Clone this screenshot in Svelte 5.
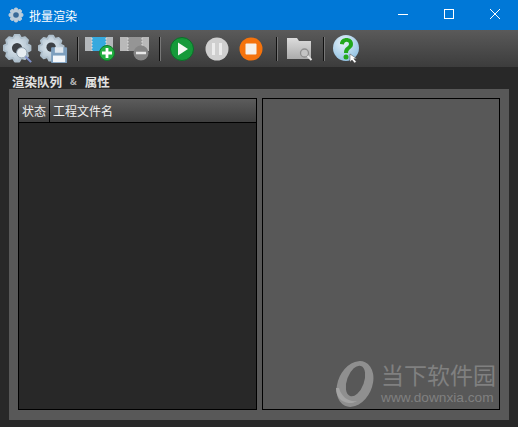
<script>
	const columns = ['状态', '工程文件名'];

	// rounded-ish cog outline, used by the two settings buttons and the title icon
	function gear(cx, cy, outer, inner, teeth = 8) {
		const step = (Math.PI * 2) / teeth;
		let d = '';
		for (let i = 0; i < teeth; i++) {
			const a = i * step - Math.PI / 2;
			const pts = [
				[inner, a - step * 0.5],
				[outer, a - step * 0.2],
				[outer, a + step * 0.2]
			];
			for (const [r, t] of pts) {
				const x = (cx + r * Math.cos(t)).toFixed(1);
				const y = (cy + r * Math.sin(t)).toFixed(1);
				d += (d ? 'L' : 'M') + x + ' ' + y;
			}
		}
		return d + 'Z';
	}
</script>

<div class="window">
	<header class="titlebar">
		<svg class="app-icon" viewBox="0 0 16 16" width="16" height="16">
			<path d={gear(8, 8, 7, 5.2)} fill="#bccddb" stroke="#bccddb" stroke-linejoin="round" />
			<circle cx="8" cy="8" r="2.800" fill="#3a6a98" />
		</svg>
		<span class="title">批量渲染</span>
		<div class="controls">
			<svg viewBox="0 0 46 30" width="46" height="30"><path d="M18 14.500h10" stroke="#fff" fill="none" /></svg>
			<svg viewBox="0 0 46 30" width="46" height="30"><rect x="18.500" y="9.500" width="9" height="9" stroke="#fff" fill="none" /></svg>
			<svg viewBox="0 0 46 30" width="46" height="30"><path d="M18 9l10 10M28 9L18 19" stroke="#fff" fill="none" /></svg>
		</div>
	</header>

	<nav class="toolbar">
		<svg class="tool gear-a" viewBox="0 0 32 32" width="30" height="30">
			<defs>
				<radialGradient id="gearfill" cx="45%" cy="45%" r="60%"><stop offset="0" stop-color="#dfeaf2" /><stop offset="1" stop-color="#aebfcc" /></radialGradient>
				<radialGradient id="help" cx="40%" cy="30%" r="75%"><stop offset="0" stop-color="#e6f2fa" /><stop offset="1" stop-color="#8fc0e2" /></radialGradient>
				<linearGradient id="folder" x1="0" y1="0" x2="0" y2="1"><stop offset="0" stop-color="#dcdcdc" /><stop offset="1" stop-color="#ababab" /></linearGradient>
			</defs>
			<path d={gear(15, 15, 14.500, 11.500)} fill="url(#gearfill)" stroke="#aebfcc" stroke-width="2" stroke-linejoin="round" />
			<circle cx="15" cy="15" r="5.500" fill="#3c4045" />
			<circle cx="20" cy="20" r="5.500" fill="#e6edf2" stroke="#8fa0ae" />
			<path d="M24 24l6 6" stroke="#7f90c8" stroke-width="2.200" />
		</svg>
		<svg class="tool gear-b" viewBox="0 0 32 32" width="30" height="30">
			<path d={gear(14, 15, 13.500, 10.500)} fill="url(#gearfill)" stroke="#aebfcc" stroke-width="2" stroke-linejoin="round" />
			<circle cx="14" cy="14" r="5" fill="#3c4045" />
			<rect x="14" y="14" width="17" height="17" rx="1" fill="#7d9fbe" />
			<rect x="18" y="14" width="9" height="6" fill="#dfe7ee" />
			<rect x="16" y="23" width="13" height="7" fill="#f4f7fa" />
		</svg>
		<span class="sep sep-a"></span>
		<svg class="tool film" viewBox="0 0 30 26" width="30" height="26">
			<rect x="0" y="1" width="28" height="14" fill="#b4b8bb" />
			<rect x="7" y="1" width="14" height="14" fill="#36a9de" />
			<path d="M7 2v13M21 2v13" stroke="#e8e8e8" stroke-dasharray="1.500 1.500" />
			<circle cx="22" cy="17" r="7.500" fill="#22b041" stroke="#12752a" />
			<path d="M22 12v10M17 17h10" stroke="#fff" stroke-width="2.800" />
		</svg>
		<svg class="tool film-off" viewBox="0 0 30 26" width="30" height="26">
			<rect x="0" y="1" width="29" height="14" fill="#b9b9b9" />
			<rect x="8" y="1" width="14" height="14" fill="#959595" />
			<path d="M8 2v13M22 2v13" stroke="#e0e0e0" stroke-dasharray="1.500 1.500" />
			<circle cx="21" cy="17" r="7.500" fill="#858585" />
			<path d="M16 17h10" stroke="#e8e8e8" stroke-width="2.500" />
		</svg>
		<span class="sep sep-b"></span>
		<svg class="tool play" viewBox="0 0 24 24" width="24" height="24">
			<circle cx="12" cy="12" r="11.500" fill="#159a3a" stroke="#0c6e29" />
			<path d="M8 5.500l10 6.500-10 6.500z" fill="#f2f8f2" />
		</svg>
		<svg class="tool pause" viewBox="0 0 24 24" width="24" height="24">
			<circle cx="12" cy="12" r="11.500" fill="#cfcfcf" />
			<path d="M7 6h3v12H7zM14 6h3v12h-3z" fill="#ececec" />
		</svg>
		<svg class="tool stop" viewBox="0 0 24 24" width="24" height="24">
			<circle cx="12" cy="12" r="11.500" fill="#f5730c" />
			<rect x="6.500" y="6.500" width="11" height="11" rx="1" fill="#f6f1ea" />
		</svg>
		<span class="sep sep-c"></span>
		<svg class="tool browse" viewBox="0 0 27 24" width="27" height="24">
			<path d="M1 1h10l2 3h12v18H1z" fill="url(#folder)" />
			<circle cx="18.500" cy="16" r="4" fill="#c4c4c4" stroke="#8e8e8e" stroke-width="1.300" />
			<path d="M21.500 19l4 4" stroke="#e4e4e4" stroke-width="2" />
		</svg>
		<span class="sep sep-d"></span>
		<svg class="tool helpme" viewBox="0 0 28 28" width="28" height="28">
			<circle cx="14" cy="13" r="13" fill="url(#help)" />
			<path d="M8 9c0-8 13-8 13 0 0 5-5 4.500-5 9h-4c0-6.500 5-6 5-9 0-3-5-3-5 .5z" fill="#22a81e" />
			<circle cx="14" cy="22" r="2.500" fill="#22a81e" />
			<path d="M18 19v8l2-2 2.500 3 1.800-1.300-2.500-3h3z" fill="#fff" stroke="#444" stroke-width=".5" />
		</svg>
	</nav>

	<div class="tabs">
		<span>渲染队列</span>
		<span class="amp">&amp;</span>
		<span>属性</span>
	</div>

	<main class="panel">
		<section class="queue">
			<div class="thead">
				{#each columns as col, i}
					<div class="th" class:first={i === 0}>{col}</div>
				{/each}
			</div>
		</section>
		<section class="props">
			<div class="watermark">
				<svg viewBox="0 0 44 46" width="44" height="46">
					<ellipse cx="22" cy="23" rx="17" ry="24" transform="rotate(25 22 23)" fill="#8f8f8f" />
					<ellipse cx="22.500" cy="20" rx="8.500" ry="16" transform="rotate(20 22.500 20)" fill="#585858" />
					<path d="M3 27c0 9 5 14 13 15 3 .3 6-.6 8-2-8 1-15-3-18-13z" fill="#a4a4a4" />
				</svg>
				<div class="mark-text">
					<div class="mark-name">当下软件园</div>
					<div class="mark-url">www.downxia.com</div>
				</div>
			</div>
		</section>
	</main>
</div>

<style>
	:global(body) {
		margin: 0;
		background: #282828;
	}

	.window {
		width: 518px;
		height: 427px;
		display: flex;
		flex-direction: column;
		background: #282828;
		font-family: "Noto Sans CJK SC", "Liberation Sans", sans-serif;
		overflow: hidden;
	}

	.titlebar {
		height: 30px;
		flex: none;
		display: flex;
		align-items: center;
		background: #0078d7;
		color: #fff;
		padding-left: 8px;
	}

	.app-icon {
		margin-right: 5px;
	}

	.title {
		font-size: 12px;
	}

	.controls {
		margin-left: auto;
		display: flex;
	}

	.toolbar {
		height: 37px;
		flex: none;
		display: flex;
		align-items: center;
		padding-left: 3px;
		background: linear-gradient(#5a5a5a, #3c3c3c);
	}

	.tool {
		flex: none;
	}

	.gear-b { margin-left: 5px; }
	.film { margin-left: 6px; }
	.film-off { margin-left: 5px; }
	.play { margin-left: 9px; }
	.pause { margin-left: 11px; }
	.stop { margin-left: 10px; }
	.browse { margin-left: 8px; }
	.helpme { margin-left: 7px; }

	.sep {
		flex: none;
		width: 1px;
		height: 24px;
		background: #111;
		border-right: 1px solid #777;
	}

	.sep-a,
	.sep-b { margin-left: 9px; }
	.sep-c { margin-left: 13px; }
	.sep-d { margin-left: 10px; }

	.tabs {
		height: 22px;
		flex: none;
		box-sizing: border-box;
		padding: 6px 0 0 12px;
		display: flex;
		align-items: center;
		gap: 8px;
		color: #e2e2e2;
		font-size: 12.5px;
		font-weight: 700;
	}

	.amp {
		font-size: 9px;
		color: #bbb;
	}

	.panel {
		margin: 0 9px;
		height: 331px;
		flex: none;
		box-sizing: border-box;
		padding: 9px 9px 10px;
		display: flex;
		gap: 5px;
		background: #585858;
	}

	.queue,
	.props {
		box-sizing: border-box;
		border: 1px solid #000;
	}

	.queue {
		width: 239px;
		flex: none;
		background: #282828;
	}

	.props {
		flex: 1;
		background: #585858;
		position: relative;
	}

	.thead {
		height: 24px;
		box-sizing: border-box;
		display: flex;
		border-bottom: 1px solid #000;
		background: linear-gradient(#5c5c5c, #3e3e3e);
		color: #f0f0f0;
		font-size: 12px;
	}

	.th {
		flex: 1;
		display: flex;
		align-items: center;
		padding-left: 3px;
	}

	.th.first {
		flex: none;
		width: 27px;
		border-right: 1px solid #000;
	}

	.watermark {
		position: absolute;
		right: 3px;
		bottom: 2px;
		display: flex;
		align-items: center;
		gap: 4px;
		color: #808080;
	}

	.mark-name {
		font-size: 23px;
		line-height: 26px;
	}

	.mark-url {
		font-family: "Liberation Sans", sans-serif;
		font-size: 13.7px;
		line-height: 18px;
		margin-top: 2px;
	}
</style>
